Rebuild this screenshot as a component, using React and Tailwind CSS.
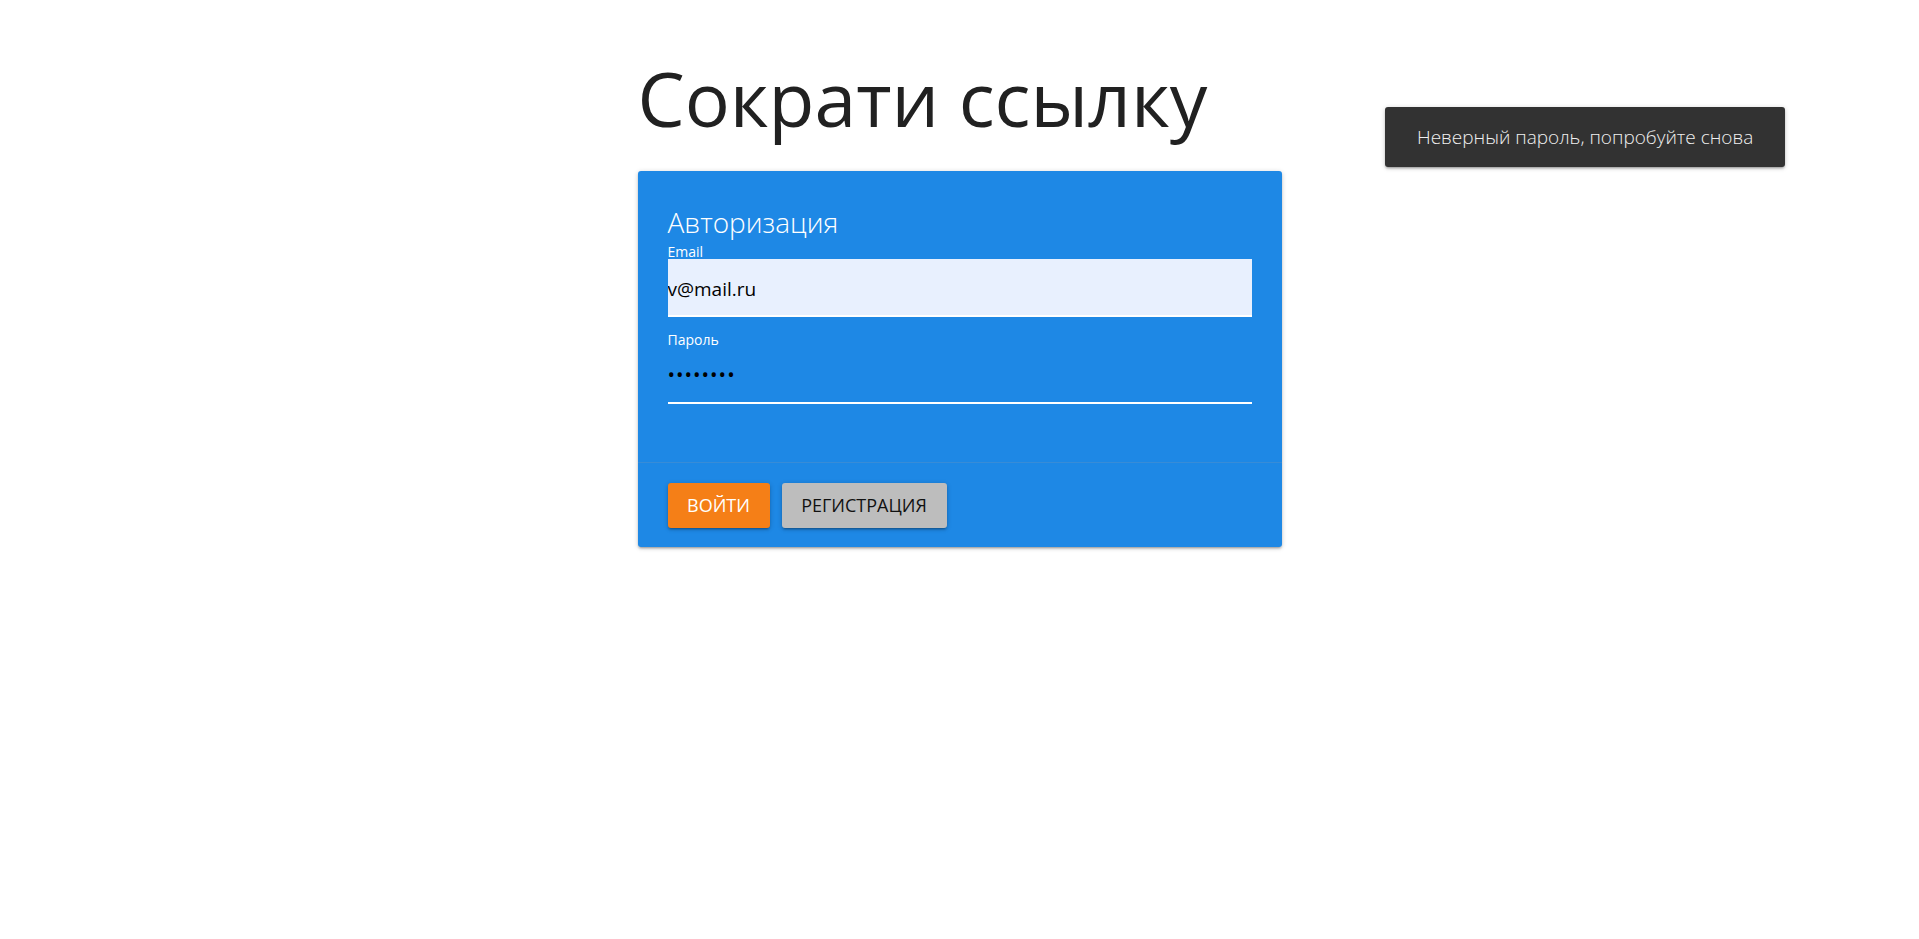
import React from 'react';

const depth1 = 'shadow-[0_2px_2px_0_rgba(0,0,0,0.14),0_3px_1px_-2px_rgba(0,0,0,0.12),0_1px_5px_0_rgba(0,0,0,0.2)]';

export default function App() {
    return (
        <div className="relative min-h-screen bg-white text-[#212121] font-['Open_Sans',_'Noto_Sans',_sans-serif]">
            {/* Main column */}
            <div className="mx-auto w-[644px] pt-[48px]">
                <h1 className="h-[100px] text-[75px] leading-[100px] font-normal mb-[23px]">
                    Сократи ссылку
                </h1>

                <div className={`bg-[#1e88e5] rounded-[3px] ${depth1}`}>
                    <div className="px-[30px] pt-[33px] pb-[58px]">
                        <div className="text-[28px] leading-[36px] font-light text-white">Авторизация</div>

                        <label className="block mt-[4px] text-[14px] leading-[15px] text-white">Email</label>
                        <input
                            readOnly
                            value="v@mail.ru"
                            className="block w-full h-[58px] bg-[#e8f0fe] text-[19px] text-black pt-[3px] border-b-2 border-white outline-none"
                        />

                        <label className="block mt-[15px] text-[14px] leading-[15px] text-white">Пароль</label>
                        <input
                            readOnly
                            type="password"
                            value="12345678"
                            className="block w-full h-[57px] bg-transparent text-[20px] text-black tracking-[1px] border-b-2 border-white outline-none"
                        />
                    </div>

                    <div className="border-t border-[rgba(160,160,160,0.2)] px-[30px] pt-[20px] pb-[19px] flex gap-[12px]">
                        <button className={`w-[102px] h-[45px] rounded-[3px] bg-[#f57f17] text-white text-[18px] uppercase ${depth1}`}>
                            Войти
                        </button>
                        <button className={`w-[165px] h-[45px] rounded-[3px] bg-[#bdbdbd] text-[#111] text-[18px] uppercase ${depth1}`}>
                            Регистрация
                        </button>
                    </div>
                </div>
            </div>

            {/* Toast */}
            <div className={`absolute top-[107px] left-[1385px] w-[400px] h-[60px] rounded-[3px] bg-[#323232] flex items-center pl-[32px] text-[19px] font-light text-[#f0f0f0] ${depth1}`}>
                Неверный пароль, попробуйте снова
            </div>
        </div>
    );
}
